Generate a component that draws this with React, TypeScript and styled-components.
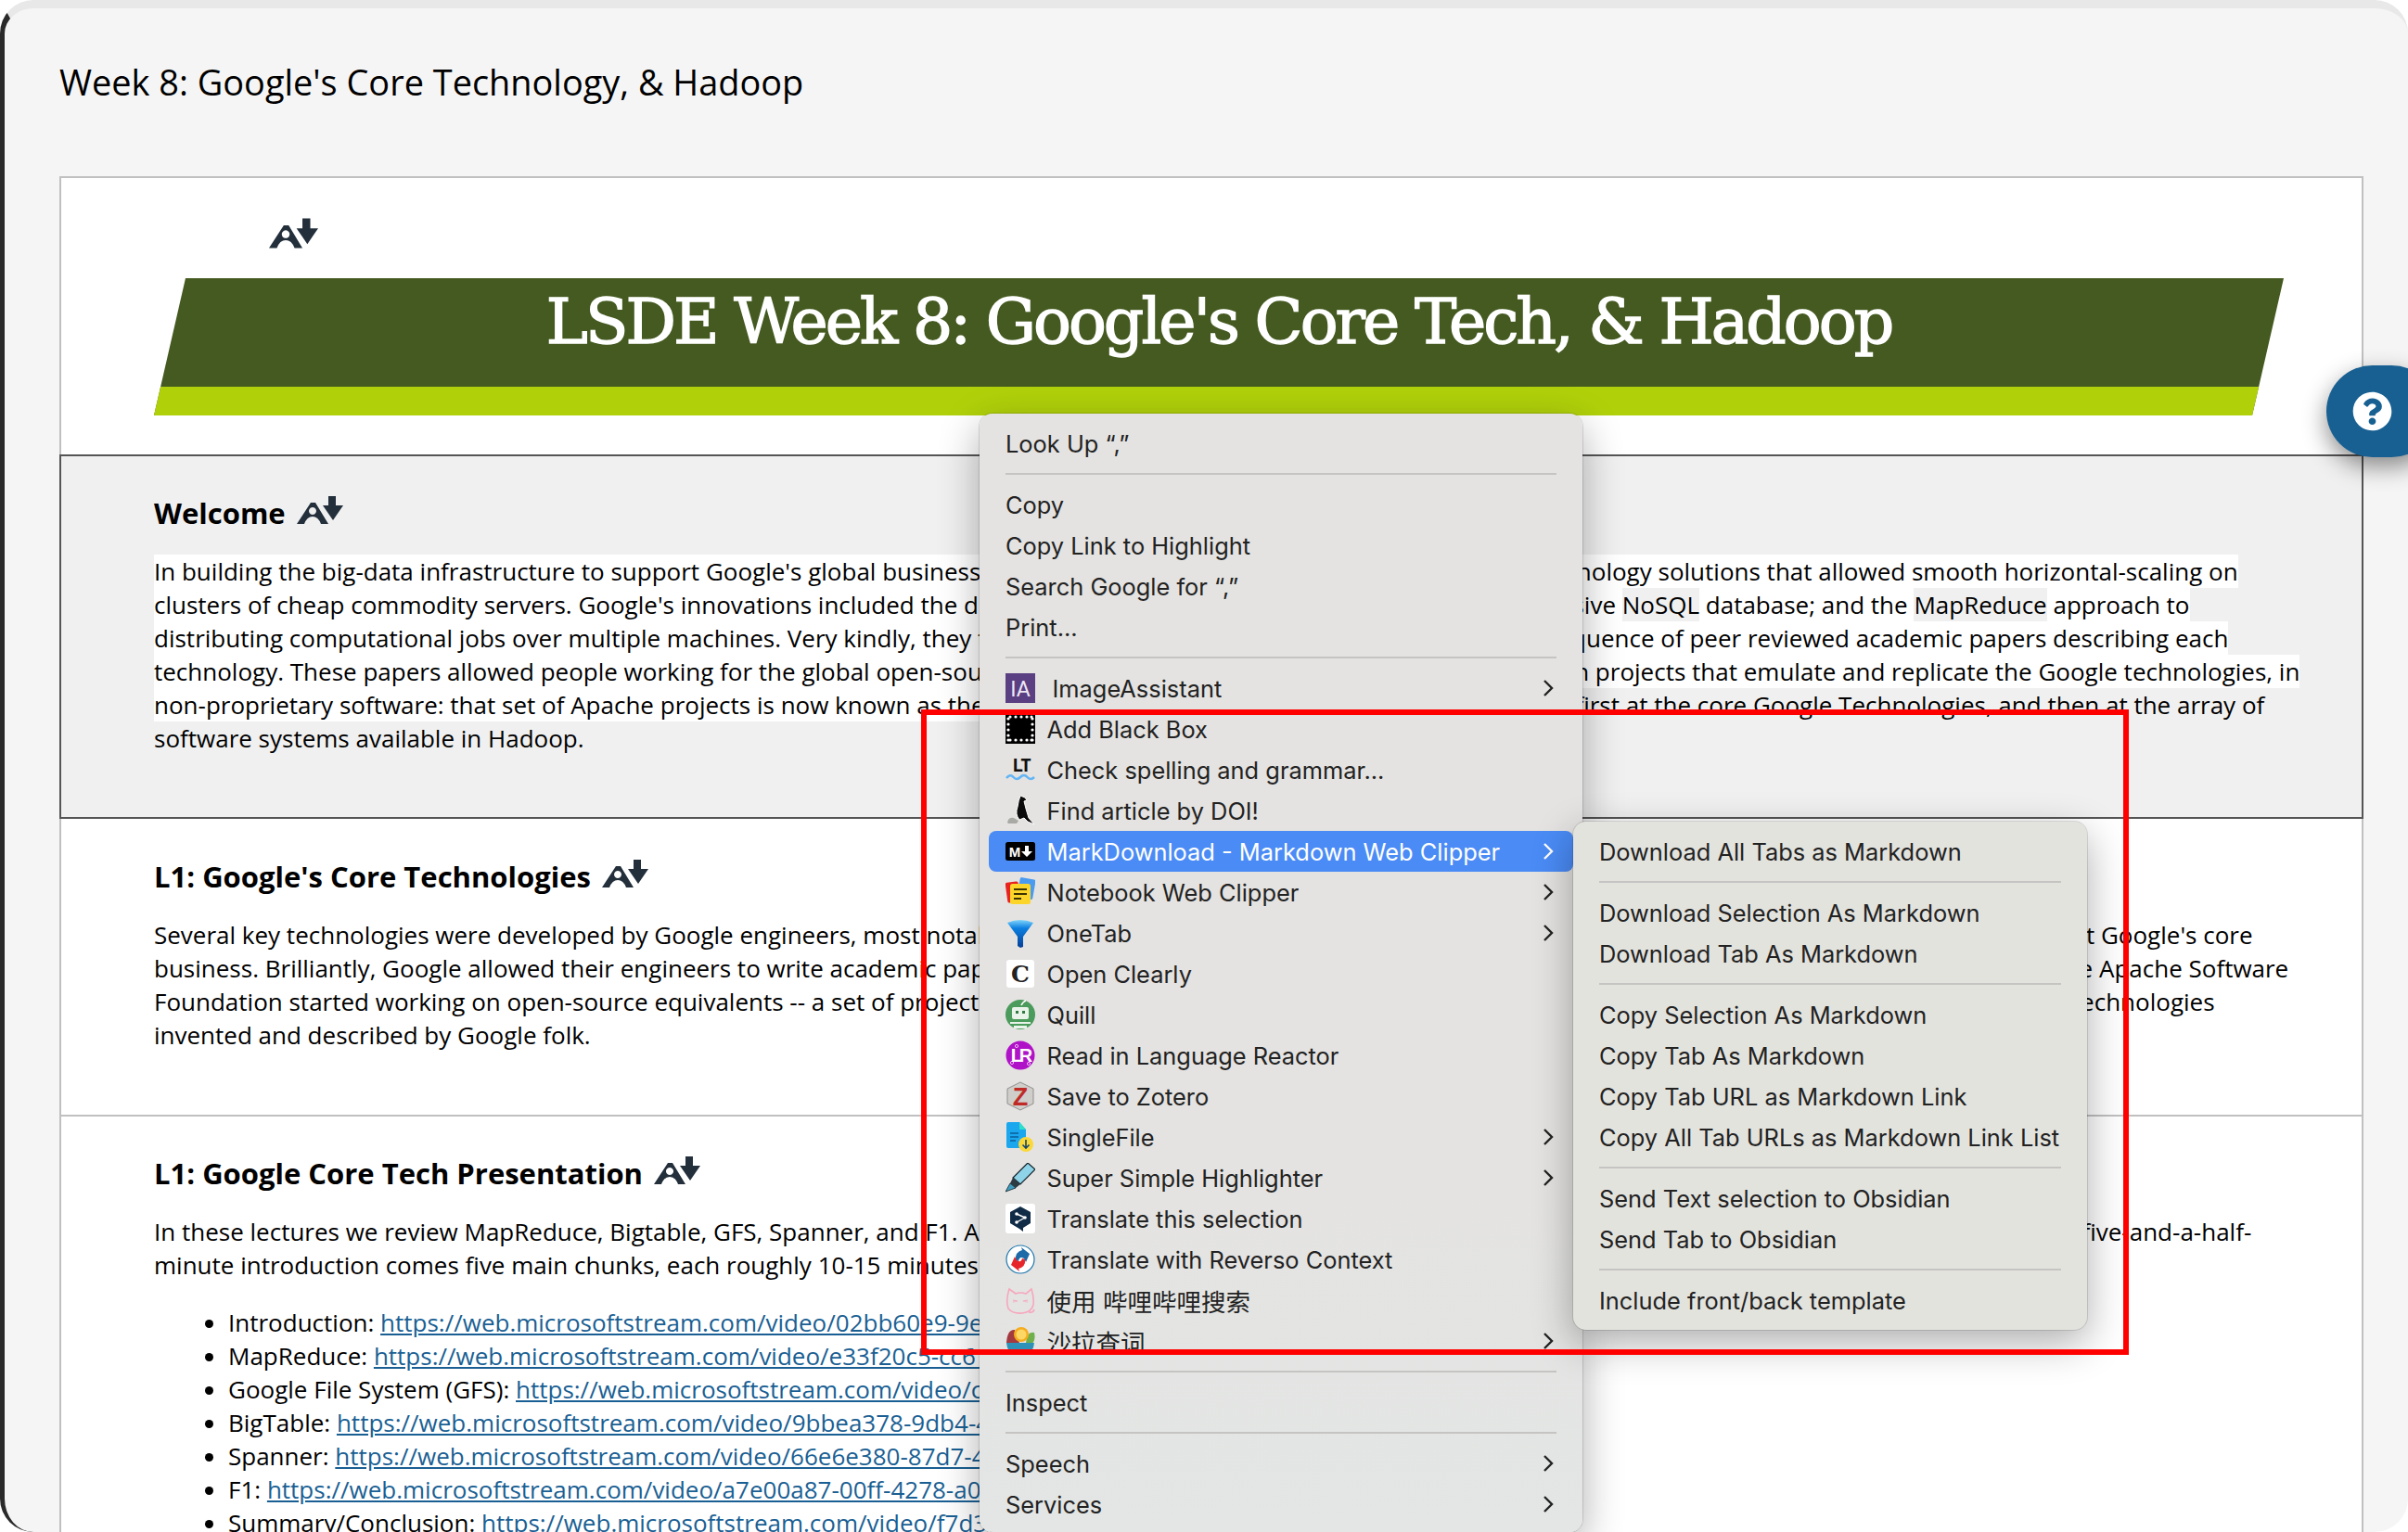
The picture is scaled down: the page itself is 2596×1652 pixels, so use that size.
import { Fragment, type ReactNode } from "react";
import styled, { createGlobalStyle } from "styled-components";
import { FaQuestionCircle } from "react-icons/fa";

const GlobalStyle = createGlobalStyle`
  html, body {
    margin: 0;
    background: #fff;
  }
`;

// the small "read aloud" mark next to each heading
const ReaderIcon = () => (
  <ReaderSvg viewBox="0 0 50 30">
    <path
      fillRule="evenodd"
      d="M0 30 L15 7 L20 7 L34 30 L26 30 Q23 22 17 22 Q11 22 8 30 Z M17 12 a4 4 0 1 0 0.01 0 Z"
    />
    <path d="M34 0 H42 V10 H50 L39 26 L28 10 H34 Z" />
  </ReaderSvg>
);

const Chevron = () => (
  <ChevronSvg viewBox="0 0 12 20">
    <polyline points="2,2 10,10 2,18" />
  </ChevronSvg>
);

const IconIA = () => (
  <IconSvg viewBox="0 0 32 32">
    <rect width="32" height="32" fill="#5a3f82" />
    <text x="16" y="25" textAnchor="middle" fontSize="23" fontFamily="Roboto, sans-serif" fill="#efe9f5">IA</text>
  </IconSvg>
);

const dots = [5, 11, 17, 23, 28];
const IconBlackBox = () => (
  <IconSvg viewBox="0 0 32 32">
    <rect width="32" height="32" fill="#000" />
    {dots.map((d) => (
      <Fragment key={d}>
        <circle cx={d} cy="3" r="1.6" fill="#fff" />
        <circle cx={d} cy="28" r="1.6" fill="#fff" />
        <circle cx="3" cy={d} r="1.6" fill="#fff" />
        <circle cx="29" cy={d} r="1.6" fill="#fff" />
      </Fragment>
    ))}
  </IconSvg>
);

const IconLT = () => (
  <IconSvg viewBox="0 0 32 32">
    <text x="16" y="18" textAnchor="middle" fontSize="20" fontWeight="700" fontFamily="'DejaVu Sans Mono', monospace" letterSpacing="-3" fill="#111">LT</text>
    <path d="M1 25 Q5 20 8.5 24 T16 24 T23.5 24 T31 24" fill="none" stroke="#62b5f5" strokeWidth="2.6" />
  </IconSvg>
);

const IconBird = () => (
  <IconSvg viewBox="0 0 32 32">
    <path d="M2 29 Q3 23 9 24 L14 27 L12 30 H3 Z" fill="#a9a9a6" />
    <path d="M16 0 L21 2 L23 5 L20 6 L22 14 L25 24 L31 31 L24 28 L20 24 L15 26 Q10 20 13 12 Q14 5 16 0 Z" fill="#0b0b0b" stroke="#fff" strokeWidth="1" />
  </IconSvg>
);

const IconMd = () => (
  <IconSvg viewBox="0 0 32 32">
    <rect y="6" width="32" height="20" rx="2.5" fill="#000" />
    <text x="10" y="22" textAnchor="middle" fontSize="15" fontWeight="700" fontFamily="'Liberation Sans', sans-serif" fill="#fff">M</text>
    <path d="M21 10 H25 V16 H29 L23 22 L17 16 H21 Z" fill="#fff" />
  </IconSvg>
);

const IconNotebook = () => (
  <IconSvg viewBox="0 0 32 32">
    <rect x="1" y="5" width="14" height="22" rx="2" fill="#e8231f" transform="rotate(-8 8 16)" />
    <rect x="14" y="1" width="17" height="22" rx="2" fill="#4a9bf0" transform="rotate(10 22 12)" />
    <rect x="5" y="7" width="22" height="22" rx="2.5" fill="#fbd52a" />
    <path d="M9 13 H23 M9 18 H23 M9 23 H17" stroke="#3b3300" strokeWidth="1.8" />
  </IconSvg>
);

const IconOneTab = () => (
  <IconSvg viewBox="0 0 32 32">
    <defs>
      <linearGradient id="funnel" x1="0" y1="0" x2="0" y2="1">
        <stop offset="0" stopColor="#7fd4fb" />
        <stop offset="0.3" stopColor="#0b7fe0" />
        <stop offset="1" stopColor="#063f96" />
      </linearGradient>
    </defs>
    <path d="M2 5 Q16 -1 30 5 L19 20 V31 L16 32 L13 30 V20 Z" fill="url(#funnel)" />
  </IconSvg>
);

const IconClearly = () => (
  <IconSvg viewBox="0 0 32 32">
    <rect x="1" y="1" width="30" height="30" rx="3" fill="#fff" />
    <text x="16" y="25" textAnchor="middle" fontSize="25" fontWeight="700" fontFamily="'DejaVu Serif', serif" fill="#222">C</text>
  </IconSvg>
);

const IconQuill = () => (
  <IconSvg viewBox="0 0 32 32">
    <circle cx="16" cy="16" r="16" fill="#4b9b5c" />
    <path d="M17 6 Q19 2 22 1" stroke="#fff" strokeWidth="1.6" fill="none" />
    <rect x="7" y="8" width="18" height="13" rx="2" fill="#e9f3ea" />
    <rect x="11" y="12" width="3" height="3" fill="#2f7a40" />
    <rect x="18" y="12" width="3" height="3" fill="#2f7a40" />
    <path d="M5 24 H27 V26 H5 Z M9 28 H23 V31 H9 Z" fill="#e9f3ea" />
  </IconSvg>
);

const IconReactor = () => (
  <IconSvg viewBox="0 0 32 32">
    <circle cx="16" cy="16" r="15.5" fill="#b012c8" />
    <circle cx="12" cy="6" r="1.6" fill="none" stroke="#f0b8f5" />
    <circle cx="7" cy="24" r="1.6" fill="none" stroke="#f0b8f5" />
    <circle cx="25" cy="25" r="1.6" fill="none" stroke="#f0b8f5" />
    <text x="16" y="23" textAnchor="middle" fontSize="20" fontWeight="700" letterSpacing="-3" fontFamily="'Liberation Sans', sans-serif" fill="#fff">LR</text>
  </IconSvg>
);

const IconZotero = () => (
  <IconSvg viewBox="0 0 32 32">
    <path d="M16 1 L30 8 V24 L16 31 L2 24 V8 Z" fill="#cfcecb" stroke="#8f8f8d" strokeWidth="1" />
    <text x="16" y="26" textAnchor="middle" fontSize="27" fontWeight="700" fontFamily="'Liberation Sans', sans-serif" fill="#bf2a26">Z</text>
  </IconSvg>
);

const IconSingleFile = () => (
  <IconSvg viewBox="0 0 32 32">
    <path d="M1 2 Q1 0 3 0 H15 L22 8 V28 H3 Q1 28 1 26 Z" fill="#1aa7ee" />
    <path d="M15 0 L22 8 H15 Z" fill="#2fe0c8" />
    <path d="M5 12 H14 M5 16 H14 M5 20 H11" stroke="#0b5d99" strokeWidth="1.5" />
    <circle cx="22" cy="24" r="8" fill="#fbd83a" />
    <path d="M22 19 V28 M18.5 24.5 L22 28 L25.5 24.5" stroke="#14466e" strokeWidth="1.6" fill="none" />
  </IconSvg>
);

const IconHighlighter = () => (
  <IconSvg viewBox="0 0 32 32">
    <path d="M24 0 L32 7 L16 23 L8 16 Z" fill="#8ed3e8" stroke="#14232a" strokeWidth="1.2" />
    <path d="M8 16 L16 23 L11 27 L5 22 Z" fill="#2d3b42" />
    <path d="M5 22 L11 27 L0 31 Z" fill="#3f9dc0" stroke="#14232a" strokeWidth="0.8" />
  </IconSvg>
);

const IconDeepL = () => (
  <IconSvg viewBox="0 0 32 32">
    <rect width="32" height="32" rx="3" fill="#fff" />
    <path d="M16 3 L27 9 V21 L19 26 V30 L15 27 L5 21 V9 Z" fill="#0f2b46" />
    <path d="M21 15 L12 11 M21 15 L12 20" stroke="#fff" strokeWidth="1.4" />
    <circle cx="12" cy="11" r="1.8" fill="#fff" />
    <circle cx="12" cy="20" r="1.8" fill="#fff" />
    <circle cx="21" cy="15" r="1.8" fill="#fff" />
  </IconSvg>
);

const IconReverso = () => (
  <IconSvg viewBox="0 0 32 32">
    <circle cx="16" cy="16" r="15" fill="#fff" stroke="#1f77ae" strokeWidth="1.2" />
    <path d="M11 17 Q10 8 18 6 L17 3 L26 10 L22 19 L20 15 Q15 12 14 18 Z" fill="#1c6aa8" />
    <path d="M21 16 Q22 24 14 26 L15 29 L6 22 L10 13 L12 17 Q17 20 18 15 Z" fill="#e7262b" />
  </IconSvg>
);

const IconBili = () => (
  <IconSvg viewBox="0 0 32 32">
    <path d="M4 4 L11 9 Q16 7 22 9 L28 4 Q31 14 30 21 Q28 29 18 30 Q8 31 3 25 Q0 16 4 4 Z M25 29 Q30 30 31 26" fill="none" stroke="#f7a6bd" strokeWidth="1.6" />
    <path d="M8 16 L13 17 L8 18 M24 16 L19 17 L24 18" fill="none" stroke="#f7a6bd" strokeWidth="1.2" />
  </IconSvg>
);

const IconSalad = () => (
  <IconSvg viewBox="0 0 32 32">
    <path d="M22 18 Q23 5 31 7 Q33 15 28 20 Z" fill="#6fb04d" />
    <path d="M1 18 Q2 3 10 4 L15 18 Z" fill="#a33a3f" />
    <circle cx="17" cy="9" r="8" fill="#f5ac1f" />
    <circle cx="17" cy="9" r="5.5" fill="#fcd766" />
    <path d="M1 18 H31 Q30 29 22 31 H10 Q2 29 1 18 Z" fill="#2e92b8" />
  </IconSvg>
);

type MenuEntry = {
  label?: string;
  icon?: ReactNode;
  arrow?: boolean;
  active?: boolean;
  wide?: boolean;
  cjk?: boolean;
};

const mainMenu: MenuEntry[] = [
  { label: "Look Up “,”" },
  {},
  { label: "Copy" },
  { label: "Copy Link to Highlight" },
  { label: "Search Google for “,”" },
  { label: "Print..." },
  {},
  { label: "ImageAssistant", icon: <IconIA />, arrow: true, wide: true },
  { label: "Add Black Box", icon: <IconBlackBox /> },
  { label: "Check spelling and grammar...", icon: <IconLT /> },
  { label: "Find article by DOI!", icon: <IconBird /> },
  { label: "MarkDownload - Markdown Web Clipper", icon: <IconMd />, arrow: true, active: true },
  { label: "Notebook Web Clipper", icon: <IconNotebook />, arrow: true },
  { label: "OneTab", icon: <IconOneTab />, arrow: true },
  { label: "Open Clearly", icon: <IconClearly /> },
  { label: "Quill", icon: <IconQuill /> },
  { label: "Read in Language Reactor", icon: <IconReactor /> },
  { label: "Save to Zotero", icon: <IconZotero /> },
  { label: "SingleFile", icon: <IconSingleFile />, arrow: true },
  { label: "Super Simple Highlighter", icon: <IconHighlighter />, arrow: true },
  { label: "Translate this selection", icon: <IconDeepL /> },
  { label: "Translate with Reverso Context", icon: <IconReverso /> },
  { label: "使用 哔哩哔哩搜索", icon: <IconBili />, cjk: true },
  { label: "沙拉查词", icon: <IconSalad />, arrow: true, cjk: true },
  {},
  { label: "Inspect" },
  {},
  { label: "Speech", arrow: true },
  { label: "Services", arrow: true },
];

const subMenu: MenuEntry[] = [
  { label: "Download All Tabs as Markdown" },
  {},
  { label: "Download Selection As Markdown" },
  { label: "Download Tab As Markdown" },
  {},
  { label: "Copy Selection As Markdown" },
  { label: "Copy Tab As Markdown" },
  { label: "Copy Tab URL as Markdown Link" },
  { label: "Copy All Tab URLs as Markdown Link List" },
  {},
  { label: "Send Text selection to Obsidian" },
  { label: "Send Tab to Obsidian" },
  {},
  { label: "Include front/back template" },
];

const lectures = [
  ["Introduction:", "https://web.microsoftstream.com/video/02bb60e9-9e3c-4a1f-8d27-6b1c0f9a7e21"],
  ["MapReduce:", "https://web.microsoftstream.com/video/e33f20c5-cc61-4f0b-92ad-1d7e3b58c604"],
  ["Google File System (GFS):", "https://web.microsoftstream.com/video/c4b1e0d2-7f36-4c58-a1e9-30d8f6b2a975"],
  ["BigTable:", "https://web.microsoftstream.com/video/9bbea378-9db4-4c0e-b6f3-82a1d47e5c10"],
  ["Spanner:", "https://web.microsoftstream.com/video/66e6e380-87d7-4e2a-9c15-f03b7d6a1e48"],
  ["F1:", "https://web.microsoftstream.com/video/a7e00a87-00ff-4278-a0c3-5e9d1b62f7a3"],
  ["Summary/Conclusion:", "https://web.microsoftstream.com/video/f7d3a1c8-2b64-4d90-8e17-c6f05a9b3d72"],
];

const renderMenu = (entries: MenuEntry[]) =>
  entries.map((entry, i) =>
    entry.label ? (
      <MenuRow key={i} $active={entry.active}>
        {entry.icon}
        <MenuLabel $wide={entry.wide} $cjk={entry.cjk}>{entry.label}</MenuLabel>
        {entry.arrow ? <Chevron /> : null}
      </MenuRow>
    ) : (
      <MenuSeparator key={i} />
    )
  );

export default function App() {
  return (
    <Page>
      <GlobalStyle />
      <Shell>
        <PageTitle>Week 8: Google's Core Technology, &amp; Hadoop</PageTitle>
        <Card>
          <Hero>
            <ReaderIcon />
            <Banner>
              <BannerTitle>LSDE Week 8: Google's Core Tech, &amp; Hadoop</BannerTitle>
              <BannerStripe />
            </Banner>
          </Hero>

          <WelcomeSection>
            <Heading>
              Welcome <ReaderIcon />
            </Heading>
            <Body>
              <Line><Mark>In building the big-data infrastructure to support Google's global business, Google's engineers{"\u200a"} developed a number of key technology solutions that allowed smooth horizontal-scaling on</Mark></Line>
              <Line><Mark>clusters of cheap commodity servers. Google's innovations included the distributed GFS{"\u200a"} File System; the scalable BigTable massive </Mark>NoSQL<Mark> database; and the </Mark>MapReduce<Mark> approach to</Mark></Line>
              <Line><Mark>distributing computational jobs over multiple machines. Very kindly, they then published to the public{"\u200a"} a longer and detailed sequence of peer reviewed academic papers describing each</Mark></Line>
              <Line><Mark>technology. These papers allowed people working for the global open-source community to then start up a whole range of open projects that emulate and replicate the Google technologies, in</Mark></Line>
              <Line><Mark>non-proprietary software: that set of Apache projects is now known as the</Mark> The Hadoop ecosystem. So in this week we will look first at the core Google Technologies, and then at the array of</Line>
              <Line>software systems available in Hadoop.</Line>
            </Body>
          </WelcomeSection>

          <CoreSection>
            <Heading>
              L1: Google's Core Technologies <ReaderIcon />
            </Heading>
            <Body>
              <Line>Several key technologies were developed by Google engineers, most notably the large-scale distributed software systems that were needed to scale out, and to keep{"\u200a"} support Google's core</Line>
              <Line>business. Brilliantly, Google allowed their engineers to write academic papers about how these technologies worked, and to publish them And after reading those papers the Apache Software</Line>
              <Line>Foundation started working on open-source equivalents -- a set of projects that came to be known as Hadoop - which aim to reproduce and to emulate the very same core technologies</Line>
              <Line>invented and described by Google folk.</Line>
            </Body>
          </CoreSection>

          <TechSection>
            <Heading>
              L1: Google Core Tech Presentation <ReaderIcon />
            </Heading>
            <Body>
              <Line>In these lectures we review MapReduce, Bigtable, GFS, Spanner, and F1. After a general overview of the Google core tech, which is covered in a shorter and relatively simple five-and-a-half-</Line>
              <Line>minute introduction comes five main chunks, each roughly 10-15 minutes long:</Line>
            </Body>
            <LectureList>
              {lectures.map(([name, url]) => (
                <li key={name}>
                  {name} <a href={url}>{url}</a>
                </li>
              ))}
            </LectureList>
          </TechSection>
        </Card>
      </Shell>

      <HelpTab>
        <FaQuestionCircle />
      </HelpTab>

      <ContextMenu>{renderMenu(mainMenu)}</ContextMenu>
      <SubMenu>{renderMenu(subMenu)}</SubMenu>
      <RedOutline />
    </Page>
  );
}

const Page = styled.div`
  position: relative;
  width: 2596px;
  height: 1652px;
  overflow: hidden;
  font-family: "Open Sans", sans-serif;
  color: #000;
`;

const Shell = styled.div`
  box-sizing: border-box;
  height: 1652px;
  overflow: hidden;
  background: #f5f5f5;
  border-top: 9px solid #e8e8e8;
  border-left: 5px solid #2a2a2a;
  border-radius: 36px;
  padding: 52px 48px 0 59px;
`;

const PageTitle = styled.h1`
  margin: 0 0 75px;
  font-size: 37.9px;
  line-height: 54px;
  font-weight: 400;
`;

const Card = styled.div`
  background: #fff;
  border: 2px solid #c0c0c0;
`;

const Hero = styled.div`
  display: flex;
  flex-direction: column;
  padding: 43px 84px 42px 100px;

  > svg {
    width: 53px;
    height: 33px;
    margin: 0 0 32px 124px;
  }
`;

const ReaderSvg = styled.svg`
  flex: none;
  width: 50px;
  height: 30px;
  margin-top: -7px;
  fill: #232f3b;
`;

const Banner = styled.div`
  height: 148px;
  background: #445a20;
  clip-path: polygon(34px 0, 100% 0, calc(100% - 34px) 100%, 0 100%);
  display: flex;
  flex-direction: column;
`;

const BannerTitle = styled.div`
  flex: 1;
  text-align: center;
  font-family: "DejaVu Serif", serif;
  font-size: 68px;
  line-height: 94px;
  letter-spacing: -3px;
  color: #fff;
  -webkit-text-stroke: 1.4px #fff;
`;

const BannerStripe = styled.div`
  height: 31px;
  background: #b0d10a;
`;

const Section = styled.section`
  padding: 43px 84px 68px 100px;
`;

const WelcomeSection = styled(Section)`
  margin: 0 -2px;
  padding-bottom: 67px;
  background: #f0f0f0;
  border: 2px solid #555;
`;

const CoreSection = styled(Section)`
  padding-top: 44px;
`;

const TechSection = styled(Section)`
  border-top: 2px solid #c0c0c0;
`;

const Heading = styled.h2`
  display: flex;
  align-items: center;
  gap: 12px;
  margin: 0 0 27px;
  font-size: 31px;
  line-height: 36px;
  font-weight: 700;
`;

const Body = styled.div`
  font-size: 26px;
  line-height: 36px;
`;

const Line = styled.div`
  white-space: nowrap;
`;

const Mark = styled.span`
  display: inline-block;
  white-space: pre;
  background: #fff;
`;

const LectureList = styled.ul`
  margin: 26px 0 0;
  padding: 0 0 0 80px;
  font-size: 26px;
  line-height: 36px;
  white-space: nowrap;

  a {
    color: #1a5f93;
    text-decoration: underline;
  }
`;

const HelpTab = styled.div`
  position: absolute;
  top: 394px;
  left: 2508px;
  width: 120px;
  height: 99px;
  padding-left: 28px;
  box-sizing: border-box;
  display: flex;
  align-items: center;
  border-radius: 50px;
  background: #186092;
  color: #fff;
  font-size: 43px;
  box-shadow: 0 10px 26px rgba(0, 0, 0, 0.45);
`;

const ContextMenu = styled.div`
  position: absolute;
  top: 446px;
  left: 1056px;
  width: 650px;
  box-sizing: border-box;
  padding: 10px 10px 8px;
  border-radius: 14px;
  background: linear-gradient(#e4e3e1 70%, #e3e6e5);
  box-shadow: 0 0 0 1px rgba(0, 0, 0, 0.12), 0 14px 44px rgba(0, 0, 0, 0.32);
  font-family: Inter, sans-serif;
  z-index: 2;
`;

const SubMenu = styled(ContextMenu)`
  top: 886px;
  left: 1696px;
  width: 554px;
  padding-bottom: 10px;
  background: #e3e3de;
  z-index: 3;
`;

const MenuRow = styled.div<{ $active?: boolean }>`
  display: flex;
  align-items: center;
  gap: 12.5px;
  height: 44px;
  padding: 0 21px 0 18px;
  border-radius: 8px;
  font-size: 25.4px;
  font-family: Inter, "Noto Sans CJK SC", sans-serif;
  white-space: nowrap;
  color: ${(p) => (p.$active ? "#fff" : "#222")};
  background: ${(p) => (p.$active ? "#4a8bf5" : "transparent")};
`;

const MenuLabel = styled.span<{ $wide?: boolean; $cjk?: boolean }>`
  flex: 1;
  margin-left: ${(p) => (p.$wide ? "6px" : "0")};
  font-size: ${(p) => (p.$cjk ? "26.5px" : "inherit")};
`;

const MenuSeparator = styled.div`
  height: 2px;
  margin: 10px 18px;
  background: #c5c4c2;
`;

const IconSvg = styled.svg`
  flex: none;
  width: 32px;
  height: 32px;
`;

const ChevronSvg = styled.svg`
  flex: none;
  width: 12px;
  height: 20px;
  fill: none;
  stroke: currentColor;
  stroke-width: 2.4;
`;

const RedOutline = styled.div`
  position: absolute;
  top: 765px;
  left: 993px;
  width: 1302px;
  height: 696px;
  box-sizing: border-box;
  border: 6px solid #ff0000;
  z-index: 4;
`;
